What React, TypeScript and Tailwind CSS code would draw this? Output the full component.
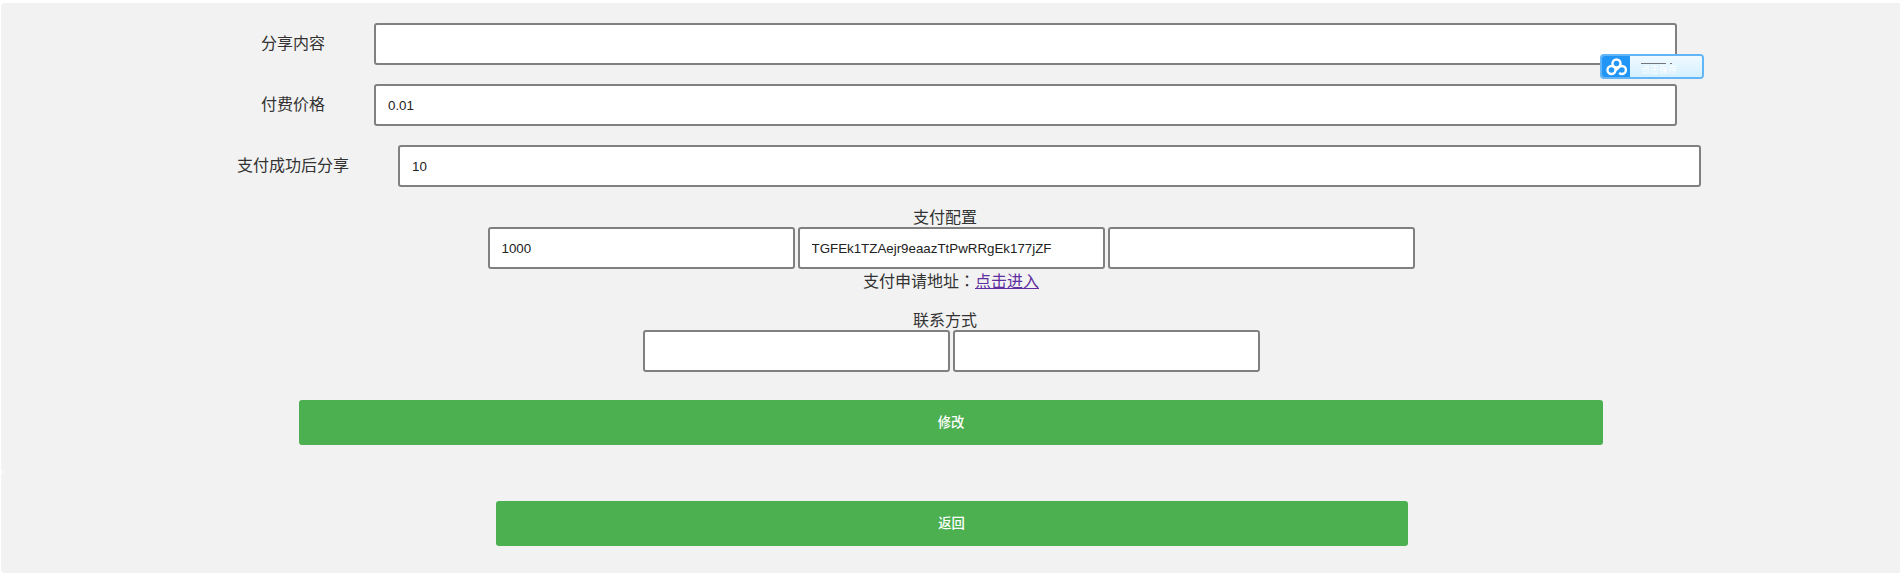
const cjk = "font-['Liberation_Sans','Noto_Sans_CJK_SC',sans-serif]";
const field =
  "h-[42px] w-[1303px] rounded-[3px] border-2 border-[#808080] bg-white px-[12px] text-[13.33px] text-[#222] outline-none";
const small =
  "h-[42px] w-[307px] rounded-[3px] border-2 border-[#808080] bg-white px-[12px] text-[13.33px] text-[#222] outline-none";

function Row({ label, value }: { label: string; value?: string }) {
  return (
    <div className="flex items-center justify-center gap-[49px] pl-[37px]">
      <label className="text-[16px] leading-[20px] text-[#333]">{label}</label>
      <input className={field} defaultValue={value} />
    </div>
  );
}

function BaiduBadge() {
  return (
    <div className="absolute left-[1600px] top-[54px] flex h-[25px] w-[104px] overflow-hidden rounded-[4px] border-2 border-[#62b6f8]">
      <div className="flex w-[28px] items-center justify-center bg-[#2196f6]">
        <svg width="21" height="18" viewBox="0 0 21 18" fill="none" stroke="white" strokeWidth="2.4">
          <circle cx="10.5" cy="5.5" r="4" />
          <circle cx="5.5" cy="12" r="4" />
          <path d="M9 12c1.5 0 2.5 -1 3.5 -2.2c1 -1.2 2.2 -1.8 3.4 -1.8a4 4 0 0 1 0 8c-1.2 0 -2 -0.4 -2.8 -1" />
        </svg>
      </div>
      <div className="relative flex-1 bg-gradient-to-b from-[#f0faff] to-[#d4f0ff]">
        <div className="absolute left-[11px] top-[7px] h-px w-[25px] bg-[#777]" />
        <div className="absolute left-[40px] top-[7px] h-px w-[2px] bg-[#777]" />
        <span className="absolute left-[11px] top-[9px] text-[9px] leading-[11px] text-white">点击保存</span>
      </div>
    </div>
  );
}

export default function App() {
  return (
    <div className={`${cjk} relative h-[574px] w-[1900px] overflow-hidden bg-white`}>
      <div className="ml-px mt-[3px] flex h-[469px] flex-col rounded-l-[4px] bg-[#f2f2f2] pt-[20px]">
        <div className="flex flex-col gap-[19px]">
          <Row label="分享内容" />
          <Row label="付费价格" value="0.01" />
          <Row label="支付成功后分享" value="10" />
        </div>

        <div className="mt-[22px] flex flex-col items-center pl-[1px] text-[16px] leading-[18px] text-[#333]">
          <span className="pr-[12px]">支付配置</span>
          <div className="flex gap-[3px]">
            <input className={small} defaultValue="1000" />
            <input className={small} defaultValue="TGFEk1TZAejr9eaazTtPwRRgEk177jZF" />
            <input className={small} />
          </div>
          <div className="mt-[2px] h-[18px]">
            支付申请地址<span className="font-['Noto_Sans_CJK_TC']">：</span>
            <a className="text-[#5f2ea0] underline">点击进入</a>
          </div>
          <span className="mt-[23px] pr-[12px]">联系方式</span>
          <div className="flex gap-[3px]">
            <input className={small} />
            <input className={small} />
          </div>
        </div>

        <button className="ml-[298px] mt-[28px] h-[45px] w-[1304px] rounded-[3px] bg-[#4caf50] text-[13.33px] font-medium text-white">
          修改
        </button>
      </div>

      <div className="ml-px flex h-[101px] justify-center rounded-l-[4px] bg-[#f2f2f2] pl-[2px] pt-[29px]">
        <button className="h-[45px] w-[912px] rounded-[3px] bg-[#4caf50] text-[13.33px] font-medium text-white">返回</button>
      </div>

      <BaiduBadge />
    </div>
  );
}
